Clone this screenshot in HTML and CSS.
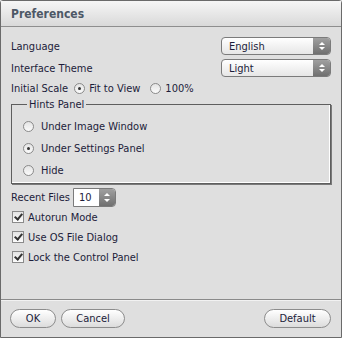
FILE: index.html
```html
<!DOCTYPE html>
<html lang="en">
<head>
    <meta charset="UTF-8">
    <title>Preferences</title>
    <link rel="stylesheet" href="styles.css">
</head>
<body>
    <div class="window">
        <div class="titlebar">Preferences</div>
        <div class="content">
            <div class="row">
                <span>Language</span>
                <div class="select"><span>English</span><span class="arrows"></span></div>
            </div>
            <div class="row row-theme">
                <span>Interface Theme</span>
                <div class="select"><span>Light</span><span class="arrows"></span></div>
            </div>
            <div class="row row-scale">
                <span>Initial Scale</span>
                <span class="radio checked"></span><span class="opt">Fit to View</span>
                <span class="radio"></span><span class="opt">100%</span>
            </div>
            <fieldset class="hints">
                <legend>Hints Panel</legend>
                <div class="hint"><span class="radio"></span>Under Image Window</div>
                <div class="hint"><span class="radio checked"></span>Under Settings Panel</div>
                <div class="hint"><span class="radio"></span>Hide</div>
            </fieldset>
            <div class="row row-recent">
                <span>Recent Files</span>
                <div class="spin"><span class="spin-value">10</span><span class="arrows"></span></div>
            </div>
            <div class="check-row"><span class="check"></span>Autorun Mode</div>
            <div class="check-row"><span class="check"></span>Use OS File Dialog</div>
            <div class="check-row"><span class="check"></span>Lock the Control Panel</div>
        </div>
        <div class="footer">
            <button class="btn btn-ok">OK</button>
            <button class="btn btn-cancel">Cancel</button>
            <button class="btn btn-default">Default</button>
        </div>
    </div>
</body>
</html>
```

FILE: styles.css
```css
body {
    margin: 0;
    background: #dfdfdf;
    font-family: "DejaVu Sans Condensed", "DejaVu Sans", sans-serif;
    font-size: 11px;
    color: #1c1c3a;
}
.window {
    width: 342px;
    height: 338px;
    box-sizing: border-box;
    border: 1px solid #6a6a6a;
    border-radius: 3px 3px 0 0;
    background: #dfdfdf;
    display: flex;
    flex-direction: column;
}
.titlebar {
    height: 25px;
    line-height: 26px;
    padding-left: 10px;
    font-weight: bold;
    font-size: 12px;
    color: #4d5866;
    background: linear-gradient(#f6f6f6, #d9d9d9);
    border-bottom: 1px solid #8e8e8e;
}
.content {
    padding: 10px 10px 0 10px;
    display: flex;
    flex-direction: column;
}
.row {
    height: 18px;
    display: flex;
    align-items: center;
}
.row-theme {
    margin-top: 4px;
}
.row-scale {
    margin-top: 3px;
    height: 16px;
}
.select {
    margin-left: auto;
    width: 110px;
    height: 18px;
    box-sizing: border-box;
    border: 1px solid #7b7b7b;
    border-radius: 4px;
    background: linear-gradient(#ffffff, #e6e6e6);
    display: flex;
    align-items: center;
    padding-left: 7px;
    overflow: hidden;
}
.select span:first-child {
    flex: 1;
}
.arrows {
    position: relative;
    width: 17px;
    height: 100%;
    background: linear-gradient(#a0a0a0, #707070);
}
.arrows::before, .arrows::after {
    content: "";
    position: absolute;
    left: 50%;
    margin-left: -3px;
    border-left: 3px solid transparent;
    border-right: 3px solid transparent;
}
.arrows::before {
    top: 4px;
    border-bottom: 3px solid #ffffff;
}
.arrows::after {
    bottom: 4px;
    border-top: 3px solid #ffffff;
}
.radio {
    width: 11px;
    height: 11px;
    box-sizing: border-box;
    border: 1px solid #8a8a8a;
    border-radius: 50%;
    background: linear-gradient(#e4e4e4, #fbfbfb);
    display: inline-flex;
    align-items: center;
    justify-content: center;
    flex-shrink: 0;
}
.radio.checked::after {
    content: "";
    width: 3px;
    height: 3px;
    border-radius: 50%;
    background: #333;
}
.row-scale .radio {
    margin-left: 6px;
    margin-right: 4px;
}
.row-scale .radio + .opt + .radio {
    margin-left: 10px;
}
.hints {
    margin: 2px 0 0 0;
    padding: 4px 0 2px 11px;
    border: 1px solid #5e5e5e;
    box-shadow: 1px 1px 0 #7a7a7a, inset -1px -1px 0 #ffffff;
}
.hints legend {
    padding: 0 2px;
    margin-left: 4px;
    line-height: 13px;
}
.hint {
    height: 22px;
    display: flex;
    align-items: center;
}
.hint .radio {
    margin-right: 7px;
}
.row-recent {
    margin-top: 4px;
    height: 19px;
}
.spin {
    margin-left: 3px;
    width: 43px;
    height: 19px;
    box-sizing: border-box;
    border: 1px solid #7b7b7b;
    border-radius: 0 4px 4px 0;
    background: #ffffff;
    display: flex;
    overflow: hidden;
}
.spin-value {
    flex: 1;
    padding-left: 5px;
    line-height: 17px;
}
.spin .arrows {
    width: 16px;
}
.check-row {
    height: 20px;
    display: flex;
    align-items: center;
}
.check-row:first-of-type {
    margin-top: 1px;
}
.check {
    position: relative;
    width: 12px;
    height: 12px;
    box-sizing: border-box;
    border: 1px solid #8a8a8a;
    background: linear-gradient(#e4e4e4, #fbfbfb);
    margin-left: 1px;
    margin-right: 4px;
}
.check::after {
    content: "";
    position: absolute;
    left: 3px;
    top: 0px;
    width: 3px;
    height: 6px;
    border-right: 2px solid #333;
    border-bottom: 2px solid #333;
    transform: rotate(40deg);
}
.footer {
    margin-top: auto;
    border-top: 1px solid #8a8a8a;
    box-shadow: inset 0 1px 0 #f2f2f2;
    padding: 9px 10px 9px 9px;
    display: flex;
    gap: 5px;
}
.btn {
    height: 19px;
    padding: 0;
    border: 1px solid #8c8c8c;
    border-radius: 10px;
    background: linear-gradient(#ffffff, #dcdcdc);
    font-family: inherit;
    font-size: 11px;
    color: #1c1c3a;
}
.btn-ok {
    width: 46px;
}
.btn-cancel {
    width: 64px;
}
.btn-default {
    width: 67px;
    margin-left: auto;
}
```
